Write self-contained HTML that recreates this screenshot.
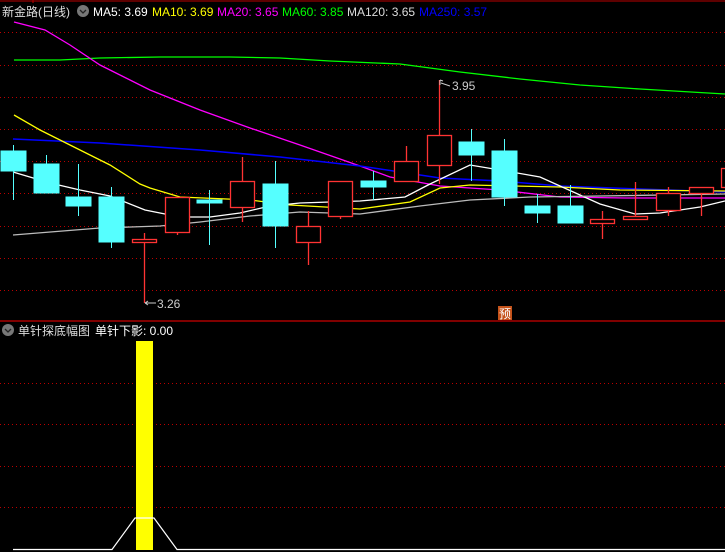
<!DOCTYPE html>
<html><head><meta charset="utf-8"><style>
html,body{margin:0;padding:0;background:#000;width:725px;height:552px;overflow:hidden}
svg{display:block}
text{font-family:"Liberation Sans","Noto Sans CJK SC",sans-serif;font-size:12px}
</style></head><body>
<svg width="725" height="552" xmlns="http://www.w3.org/2000/svg">
<line x1="0" y1="1" x2="725" y2="1" stroke="#b00" stroke-width="1"/>
<line x1="33" y1="0" x2="33" y2="3" stroke="#b00"/>
<g stroke="#b00" stroke-dasharray="1,3" stroke-width="1">
<line x1="0" y1="32.5" x2="725" y2="32.5"/><line x1="0" y1="65.5" x2="725" y2="65.5"/>
<line x1="0" y1="97.5" x2="725" y2="97.5"/><line x1="0" y1="129.5" x2="725" y2="129.5"/>
<line x1="0" y1="161.5" x2="725" y2="161.5"/><line x1="0" y1="193.5" x2="725" y2="193.5"/>
<line x1="0" y1="226.5" x2="725" y2="226.5"/><line x1="0" y1="258.5" x2="725" y2="258.5"/>
<line x1="0" y1="290.5" x2="725" y2="290.5"/>
<line x1="0" y1="383.5" x2="725" y2="383.5"/><line x1="0" y1="424.5" x2="725" y2="424.5"/>
<line x1="0" y1="466.5" x2="725" y2="466.5"/><line x1="0" y1="507.5" x2="725" y2="507.5"/>
</g>
<line x1="0" y1="321" x2="725" y2="321" stroke="#c00" stroke-width="1.2"/>
<polyline fill="none" stroke="#0f0" stroke-width="1.3" points="14,60 60,60 100,58 160,57 230,57 280,58 330,61 400,64 460,72 520,79 580,85 640,89 725,94"/>
<polyline fill="none" stroke="#f0f" stroke-width="1.3" points="14,22 45,30 70,45 100,65 150,90 200,110 250,128 300,145 360,166 390,177 440,186 500,190 560,197 625,198 725,198"/>
<polyline fill="none" stroke="#00f" stroke-width="1.5" points="13,139 100,143 200,150 280,157 360,166 440,178 500,181 560,186 640,189 725,192"/>
<polyline fill="none" stroke="#ff0" stroke-width="1.3" points="14,115 40,130 80,150 110,165 140,184 150,188 180,197 250,200 290,205 360,209 410,202 440,188 470,185 560,187 620,190 725,191"/>
<polyline fill="none" stroke="#fff" stroke-width="1.3" points="13,172 50,183 80,190 110,196 145,210 180,217 210,217 240,213 270,206 300,203 360,201 405,197 430,184 470,165 500,170 540,177 560,186 600,204 635,214 660,213 700,207 725,201"/>
<polyline fill="none" stroke="#bbb" stroke-width="1.3" points="13,235 100,228 160,226 200,222 250,216 300,212 360,214 420,206 470,200 530,197 600,196 725,194"/>
<g stroke="#5ff" fill="#5ff">
<line x1="13.5" y1="145" x2="13.5" y2="200"/><rect x="1" y="151" width="25" height="20"/>
<line x1="46.5" y1="155" x2="46.5" y2="193"/><rect x="34" y="164" width="25" height="29"/>
<line x1="78.5" y1="164" x2="78.5" y2="216"/><rect x="66" y="197" width="25" height="9"/>
<line x1="111.5" y1="187" x2="111.5" y2="248"/><rect x="99" y="197" width="25" height="45"/>
<line x1="209.5" y1="190" x2="209.5" y2="245"/><rect x="197" y="200" width="25" height="3"/>
<line x1="275.5" y1="161" x2="275.5" y2="248"/><rect x="263" y="184" width="25" height="42"/>
<line x1="373.5" y1="171" x2="373.5" y2="200"/><rect x="361" y="181" width="25" height="6"/>
<line x1="471.5" y1="129" x2="471.5" y2="181"/><rect x="459" y="142" width="25" height="13"/>
<line x1="504.5" y1="139" x2="504.5" y2="206"/><rect x="492" y="151" width="25" height="46"/>
<line x1="537.5" y1="194" x2="537.5" y2="223"/><rect x="525" y="206" width="25" height="7"/>
<line x1="570.5" y1="185" x2="570.5" y2="223"/><rect x="558" y="206" width="25" height="17"/>
</g>
<g stroke="#f33" fill="#000" stroke-width="1.3">
<line x1="144.5" y1="233" x2="144.5" y2="303"/><rect x="132.5" y="239.5" width="24" height="3"/>
<line x1="177.5" y1="232" x2="177.5" y2="235"/><rect x="165.5" y="197.5" width="24" height="35"/>
<line x1="242.5" y1="157" x2="242.5" y2="222"/><rect x="230.5" y="181.5" width="24" height="26"/>
<line x1="308.5" y1="211" x2="308.5" y2="265"/><rect x="296.5" y="226.5" width="24" height="16"/>
<line x1="340.5" y1="217" x2="340.5" y2="219"/><rect x="328.5" y="181.5" width="24" height="35"/>
<line x1="406.5" y1="146" x2="406.5" y2="181"/><rect x="394.5" y="161.5" width="24" height="20"/>
<line x1="439.5" y1="80" x2="439.5" y2="184"/><rect x="427.5" y="135.5" width="24" height="30"/>
<line x1="602.5" y1="211" x2="602.5" y2="239"/><rect x="590.5" y="219.5" width="24" height="4"/>
<line x1="635.5" y1="182" x2="635.5" y2="219"/><rect x="623.5" y="216.5" width="24" height="3"/>
<line x1="668.5" y1="187" x2="668.5" y2="216"/><rect x="656.5" y="193.5" width="24" height="17"/>
<line x1="701.5" y1="187" x2="701.5" y2="216"/><rect x="689.5" y="187.5" width="24" height="6"/>
<rect x="721.5" y="168.5" width="10" height="19"/>
</g>
<g stroke="#ccc" fill="none"><path d="M145,303 L156,303 M145,303 l3,-2 M145,303 l3,2"/><path d="M440,80 L440,85 M440,80 L443,81 M441,83 Q444,84 450,86"/></g>
<text x="157" y="308" fill="#ccc">3.26</text>
<text x="452" y="90" fill="#ccc">3.95</text>
<rect x="498" y="306" width="14" height="14" fill="#c4521a"/>
<text x="499" y="318" fill="#fff">预</text>
<text x="2" y="16" fill="#ddd">新金路(日线)</text>
<circle cx="83" cy="11" r="6" fill="#777"/><path d="M80,10 L83,13 L86,10" stroke="#222" fill="none" stroke-width="1.3"/>
<text x="93" y="16" fill="#fff">MA5: 3.69</text>
<text x="152" y="16" fill="#ff0">MA10: 3.69</text>
<text x="217" y="16" fill="#f0f">MA20: 3.65</text>
<text x="282" y="16" fill="#0f0">MA60: 3.85</text>
<text x="347" y="16" fill="#ddd">MA120: 3.65</text>
<text x="419" y="16" fill="#00f">MA250: 3.57</text>
<circle cx="8" cy="330" r="6" fill="#777"/><path d="M5,329 L8,332 L11,329" stroke="#222" fill="none" stroke-width="1.3"/>
<text x="18" y="335" fill="#ddd">单针探底幅图</text>
<text x="95" y="335" fill="#fff">单针下影: 0.00</text>
<rect x="136" y="341" width="17" height="209" fill="#ff0"/>
<polyline fill="none" stroke="#fff" stroke-width="1.2" points="13,549.5 112,549.5 135,518 154,518 177,549.5 725,549.5"/>
</svg>
</body></html>
